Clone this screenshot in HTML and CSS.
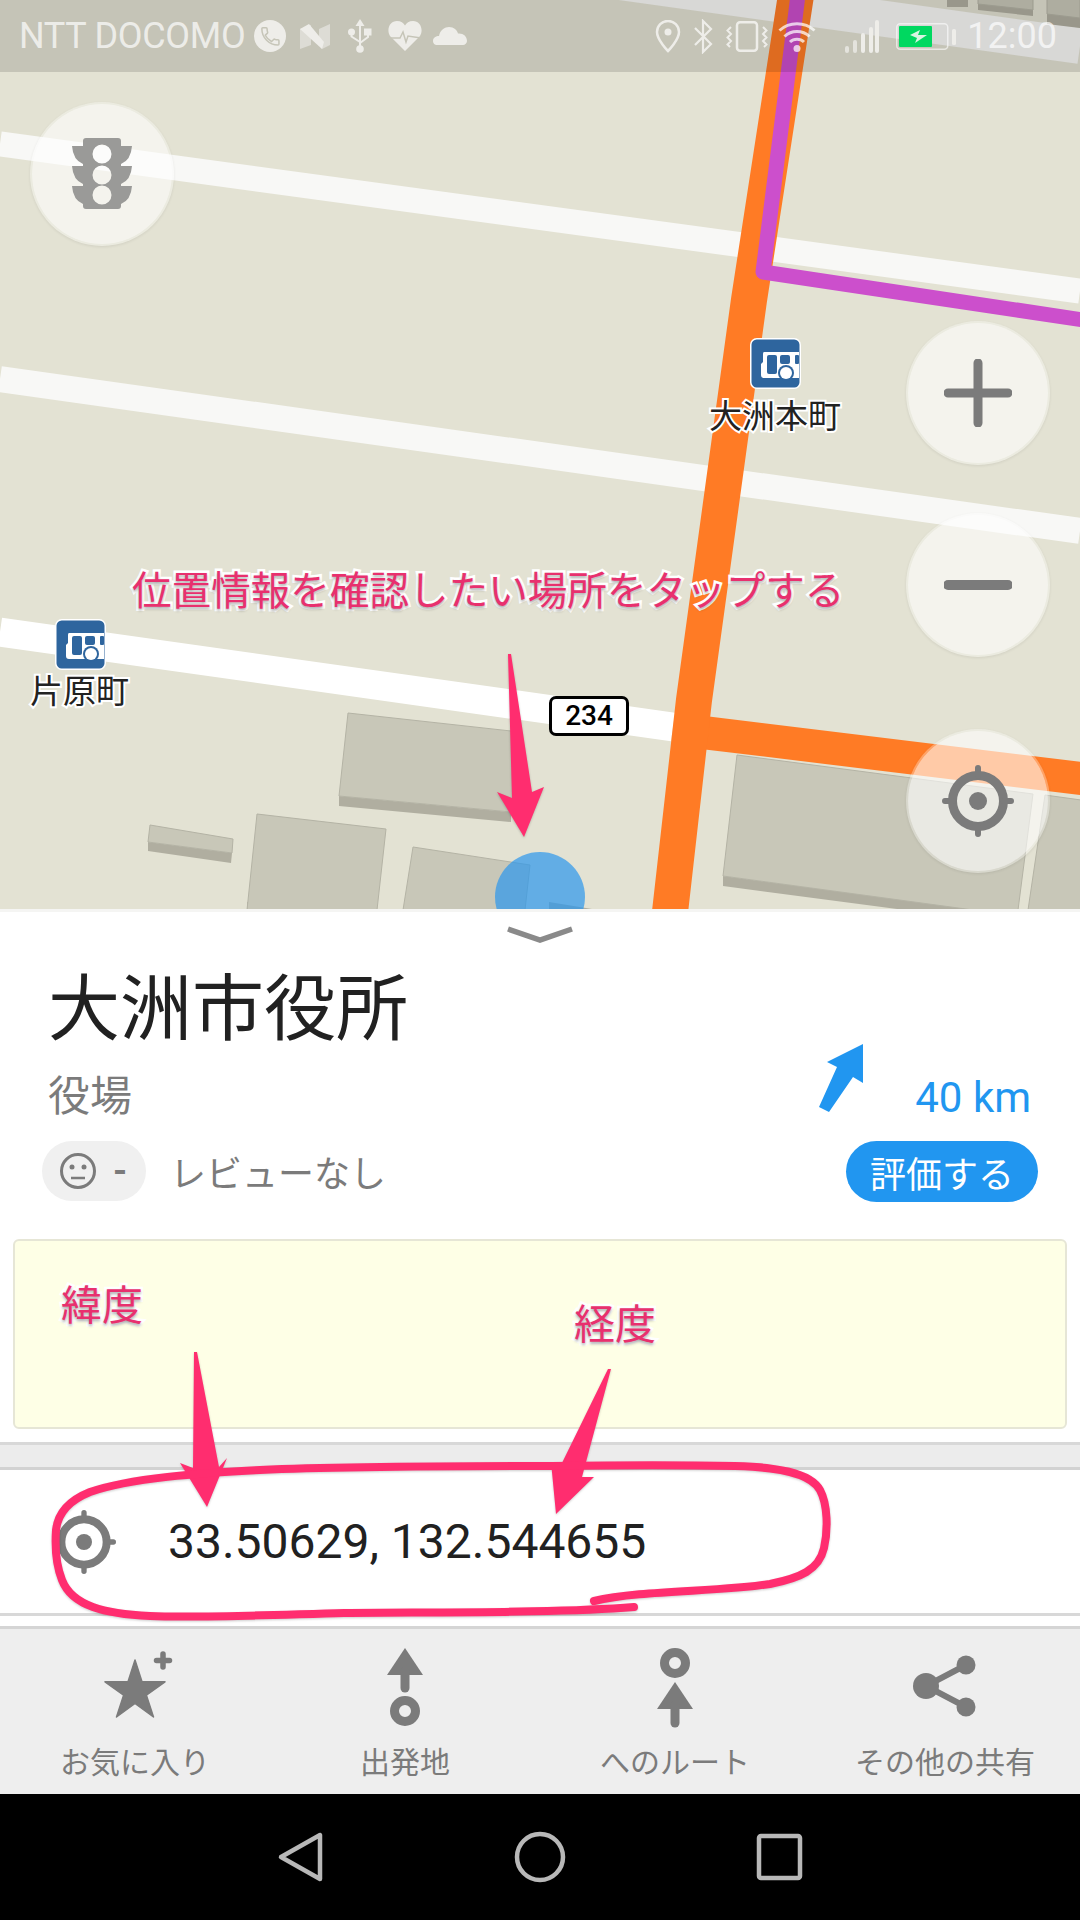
FILE: index.html
```html
<!DOCTYPE html>
<html lang="ja">
<head>
<meta charset="utf-8">
<title>大洲市役所</title>
<link rel="stylesheet" href="styles.css">
</head>
<body>
<svg class="defs" width="0" height="0">
  <symbol id="bus" viewBox="0 0 51 51">
    <rect x="0.75" y="0.75" width="49.5" height="49.5" rx="6" fill="#2e659e" stroke="#fff" stroke-width="1.5"/>
    <path d="M14 14H49V40H14Q11 40 11 37V26L13 24V16Q13 14 14 14Z" fill="#fff"/>
    <rect x="17" y="17" width="10" height="19" rx="2" fill="#2e659e"/>
    <rect x="30" y="17" width="10" height="9" rx="2" fill="#2e659e"/>
    <rect x="45" y="17" width="4" height="9" rx="1" fill="#2e659e"/>
    <circle cx="36" cy="35" r="8" fill="#2e659e"/>
    <circle cx="36" cy="35" r="6" fill="#fff"/>
  </symbol>
  <symbol id="target" viewBox="0 0 72 72">
    <circle cx="36" cy="36" r="25.5" fill="none" stroke="#7b7b7b" stroke-width="9"/>
    <circle cx="36" cy="36" r="9" fill="#7b7b7b"/>
    <path d="M36 3V11M36 61V69M3 36H11M61 36H69" stroke="#7b7b7b" stroke-width="6" stroke-linecap="round"/>
  </symbol>
</svg>

<div class="app">
  <section class="map">
    <svg class="map-canvas" width="1080" height="909" viewBox="0 0 1080 909">
      <rect width="1080" height="909" fill="#e3e2d3"/>
      <g stroke="#f8f8f6" fill="none">
        <path d="M0 144L1080 291" stroke-width="25"/>
        <path d="M0 379L1080 531" stroke-width="26"/>
        <path d="M620 -18L1080 46" stroke-width="36"/>
      </g>
      <path d="M0 632L673 727" stroke="#fff" stroke-width="29" fill="none"/>
      <g fill="#b0aea0">
        <polygon points="947,0 968,0 968,7 947,7"/>
        <polygon points="978,0 1033,0 1033,16 978,10"/>
        <polygon points="1047,0 1080,0 1080,28 1047,24"/>
        <polygon points="339,796 511,812 511,822 339,806"/>
        <polygon points="148,842 232,853 231,863 148,851"/>
        <polygon points="247,902 290,909 247,909"/>
        <polygon points="723,876 973,909 897,909 723,886"/>
      </g>
      <g fill="#c8c7b8" stroke="#b4b3a5" stroke-width="1">
        <polygon points="978,-20 1033,-20 1033,10 978,4"/>
        <polygon points="1047,-20 1080,-20 1080,18 1047,14"/>
        <polygon points="348,713 520,732 511,812 339,796"/>
        <polygon points="150,825 233,839 232,853 148,842"/>
        <polygon points="257,814 386,829 377,910 247,910"/>
        <polygon points="413,847 530,865 525,910 403,910"/>
        <polygon points="737,755 1033,794 1018,910 973,910 723,876"/>
        <polygon points="1045,795 1081,800 1081,910 1028,910"/>
      </g>
      <path d="M549 902L592 909H549Z" fill="#b0aea0"/>
      <g fill="none" stroke="#ff7b25">
        <path d="M707 733L1085 779" stroke-width="33"/>
        <path d="M796 -5L749 300L694 700L670 912" stroke-width="36"/>
      </g>
      <path d="M798 -5L763 272L1090 321" fill="none" stroke="#cc4fcc" stroke-width="15" stroke-linejoin="round"/>
      <circle cx="540" cy="897" r="45" fill="#2b97ed" fill-opacity="0.7"/>
    </svg>

    <span class="shield">234</span>

    <svg class="poi poi-honmachi" width="51" height="51"><use href="#bus"/></svg>
    <span class="poi-label label-honmachi">大洲本町</span>
    <svg class="poi poi-katahara" width="51" height="51"><use href="#bus"/></svg>
    <span class="poi-label label-katahara">片原町</span>

    <button class="fab fab-traffic" type="button" aria-label="交通情報">
      <svg width="60" height="72" viewBox="0 0 60 72">
        <path fill="#9a9a98" fill-rule="evenodd" d="M14 0H46Q49 0 49 3V68Q49 71 46 71H14Q11 71 11 68V3Q11 0 14 0ZM30 6.500A9.500 9.500 0 1 0 30 25.500A9.500 9.500 0 1 0 30 6.500ZM30 27.500A9.500 9.500 0 1 0 30 46.500A9.500 9.500 0 1 0 30 27.500ZM30 47.500A9.500 9.500 0 1 0 30 66.500A9.500 9.500 0 1 0 30 47.500Z"/>
        <path fill="#9a9a98" d="M11 8H0Q1 22 11 26ZM49 8H60Q59 22 49 26ZM11 28H0Q1 42 11 46ZM49 28H60Q59 42 49 46ZM11 48H0Q1 62 11 66ZM49 48H60Q59 62 49 66Z"/>
      </svg>
    </button>
    <button class="fab fab-plus" type="button" aria-label="拡大">
      <svg width="68" height="68" viewBox="0 0 68 68"><path d="M34 4V64M4 34H64" stroke="#7b7b7b" stroke-width="9" stroke-linecap="round"/></svg>
    </button>
    <button class="fab fab-minus" type="button" aria-label="縮小">
      <svg width="68" height="12" viewBox="0 0 68 12"><path d="M4 6H64" stroke="#7b7b7b" stroke-width="10" stroke-linecap="round"/></svg>
    </button>
    <button class="fab fab-locate" type="button" aria-label="現在地">
      <svg width="72" height="72"><use href="#target"/></svg>
    </button>

    <header class="status">
      <div class="status-group">
        <span class="carrier">NTT DOCOMO</span>
        <svg class="ic-phone" width="32" height="32" viewBox="0 0 32 32"><circle cx="16" cy="16" r="16" fill="#eeede9"/><path transform="translate(5 5) scale(.95)" fill="none" stroke="#c6c5b8" stroke-width="1.600" d="M6.600 10.800c1.400 2.800 3.800 5.100 6.600 6.600l2.200-2.200c.3-.3.700-.4 1-.2 1.100.4 2.300.6 3.600.6.600 0 1 .4 1 1V20c0 .6-.4 1-1 1C10.600 21 3 13.400 3 4c0-.6.400-1 1-1h3.500c.6 0 1 .4 1 1 0 1.300.2 2.500.6 3.600.1.300 0 .7-.2 1l-2.300 2.200z"/></svg>
        <svg class="ic-n" width="30" height="25" viewBox="0 0 30 25"><polygon points="0,5 0,25 11,21 11,1" fill="#dddcd5"/><polygon points="19,5 30,0 30,21 22,25 19,19" fill="#dddcd5"/><polygon points="0,5 9,0 24,18 22,25" fill="#eeede9"/></svg>
        <svg class="ic-usb" width="24" height="34" viewBox="0 0 24 34"><g fill="#eeede9"><path d="M12 0L7.500 7H16.500Z"/><circle cx="12" cy="30" r="3.800"/><circle cx="3.500" cy="13" r="3.500"/><rect x="16" y="9.500" width="7.500" height="7"/></g><path d="M12 5V29M3.500 14V17.500L12 23M20 15V18L12 24" fill="none" stroke="#eeede9" stroke-width="2"/></svg>
        <svg class="ic-heart" width="34" height="30" viewBox="0 0 34 30"><path fill="#eeede9" d="M17 30L2 15C-2 8 2 0 9 0C13 0 15.500 2 17 4.500C18.500 2 21 0 25 0C32 0 36 8 32 15Z"/><polyline points="1,17 12,17 15,11 18,21 20,15 33,17" fill="none" stroke="#c6c5b8" stroke-width="1.500"/></svg>
        <svg class="ic-cloud" width="34" height="18" viewBox="0 0 34 18"><path fill="#eeede9" d="M4 18C1 18 0 15.500 0 14C0 10.500 3 9 6 9C7 3 12 0 16 0C21 0 24 3 25 6.500C30 6 34 9 34 14C34 16 32 18 30 18Z"/></svg>
      </div>
      <div class="status-group">
        <svg class="ic-pin" width="26" height="33" viewBox="0 0 26 33"><path d="M13 31C13 31 2 20 2 12A11 11 0 0 1 24 12C24 20 13 31 13 31Z" fill="none" stroke="#eeede9" stroke-width="2.500"/><circle cx="13" cy="12" r="3.500" fill="#eeede9"/></svg>
        <svg class="ic-bt" width="21" height="35" viewBox="0 0 21 35"><polyline points="2,9 18,25 10,33 10,2 18,10 2,26" fill="none" stroke="#eeede9" stroke-width="2.200"/></svg>
        <svg class="ic-vib" width="42" height="31" viewBox="0 0 42 31"><rect x="11" y="1.250" width="20" height="28.500" rx="3" fill="none" stroke="#eeede9" stroke-width="2.500"/><path d="M5 6L1.500 9.500L5 13L1.500 16.500L5 20L1.500 23.500L4 26M37 6L40.500 9.500L37 13L40.500 16.500L37 20L40.500 23.500L38 26" fill="none" stroke="#eeede9" stroke-width="2"/></svg>
        <svg class="ic-wifi" width="38" height="33" viewBox="0 0 38 33"><circle cx="19" cy="28.500" r="3.500" fill="#fff" fill-opacity=".72"/><path d="M12 22A10 10 0 0 1 26 22M6.500 16.500A18 18 0 0 1 31.500 16.500M1.500 10.500A26 26 0 0 1 36.500 10.500" fill="none" stroke="#fff" stroke-opacity=".72" stroke-width="3"/></svg>
        <svg class="ic-signal" width="34" height="33" viewBox="0 0 34 33"><g fill="#eeede9"><rect x="0" y="26" width="4" height="7" rx="2" opacity=".75"/><rect x="8" y="20" width="4" height="13" rx="2" opacity=".75"/><rect x="16" y="13" width="4" height="20" rx="2"/><rect x="24" y="7" width="4" height="26" rx="2"/><rect x="30" y="0" width="4" height="33" rx="2"/></g></svg>
        <svg class="ic-batt" width="60" height="27" viewBox="0 0 60 27"><rect x=".75" y=".75" width="51" height="25.500" rx="3.500" fill="none" stroke="#fff" stroke-opacity=".6" stroke-width="1.500"/><rect x="3" y="3" width="33" height="21" rx="1" fill="#00d860"/><path d="M14 12L24 7L22 12H31L19 20L21 15Z" fill="#d8f5e2"/><rect x="56" y="6" width="4" height="16" rx="1.500" fill="#eeede9"/></svg>
        <time class="clock">12:00</time>
      </div>
    </header>
  </section>

  <section class="sheet">
    <div class="handle">
      <svg width="68" height="18" viewBox="0 0 68 18"><path d="M2 3L34 14L66 3" fill="none" stroke="#8a8a8a" stroke-width="5.500"/></svg>
    </div>
    <div class="place">
      <div class="place-info">
        <h1 class="place-name">大洲市役所</h1>
        <p class="place-type">役場</p>
        <div class="review">
          <span class="review-chip">
            <svg width="38" height="38" viewBox="0 0 38 38"><circle cx="19" cy="19" r="16.500" fill="none" stroke="#7b7b7b" stroke-width="3"/><circle cx="13" cy="15" r="2.500" fill="#7b7b7b"/><circle cx="25" cy="15" r="2.500" fill="#7b7b7b"/><path d="M12 26H26" stroke="#7b7b7b" stroke-width="2.500"/></svg>
            <span class="review-score">-</span>
          </span>
          <span class="review-text">レビューなし</span>
        </div>
      </div>
      <div class="place-side">
        <div class="distance">
          <svg width="44" height="68" viewBox="0 0 44 68"><polygon points="44,0 8,18 18,23 0,63 10,68 34,33 44,39" fill="#2196f0"/></svg>
          <span class="distance-text">40 km</span>
        </div>
        <button class="rate" type="button">評価する</button>
      </div>
    </div>
    <div class="note"></div>
    <div class="band"></div>
    <div class="coords">
      <svg width="64" height="64"><use href="#target"/></svg>
      <span class="coords-text">33.50629, 132.544655</span>
    </div>
    <div class="spacer"></div>
    <nav class="actions">
      <div class="action">
        <svg width="80" height="80" viewBox="94 1648 80 80"><polygon points="134,1660 141,1681.800 164,1681.800 145.400,1695.200 152.500,1717 134,1703.500 115.500,1717 122.600,1695.200 104,1681.800 127,1681.800" fill="#7b7b7b" stroke="#7b7b7b" stroke-width="1.500" stroke-linejoin="round"/><path d="M162 1654V1667M155.500 1660.500H168.500" stroke="#7b7b7b" stroke-width="5.500" stroke-linecap="round"/></svg>
        <span class="action-label">お気に入り</span>
      </div>
      <div class="action">
        <svg width="80" height="80" viewBox="365 1648 80 80"><polygon points="405,1648 423,1675 387,1675" fill="#7b7b7b"/><path d="M405 1672V1688" stroke="#7b7b7b" stroke-width="9" stroke-linecap="round"/><circle cx="405" cy="1711" r="10.500" fill="none" stroke="#7b7b7b" stroke-width="9"/></svg>
        <span class="action-label">出発地</span>
      </div>
      <div class="action">
        <svg width="80" height="80" viewBox="635 1648 80 80"><circle cx="675" cy="1663" r="10.500" fill="none" stroke="#7b7b7b" stroke-width="9"/><polygon points="675,1682 693,1709 657,1709" fill="#7b7b7b"/><path d="M675 1706V1723" stroke="#7b7b7b" stroke-width="9" stroke-linecap="round"/></svg>
        <span class="action-label">へのルート</span>
      </div>
      <div class="action">
        <svg width="80" height="80" viewBox="905 1648 80 80"><path d="M966 1665L926 1686L966 1707" fill="none" stroke="#7b7b7b" stroke-width="6"/><circle cx="966" cy="1665" r="9.500" fill="#7b7b7b"/><circle cx="926" cy="1686" r="13" fill="#7b7b7b"/><circle cx="966" cy="1707" r="9.500" fill="#7b7b7b"/></svg>
        <span class="action-label">その他の共有</span>
      </div>
    </nav>
  </section>

  <footer class="navbar">
    <svg width="1080" height="126" viewBox="0 1794 1080 126">
      <g fill="none" stroke="#b8b8b8" stroke-width="4.500" stroke-linejoin="round">
        <polygon points="320,1835 320,1879 281,1857"/>
        <circle cx="540" cy="1857" r="23"/>
        <rect x="759" y="1836" width="41" height="42" rx="2"/>
      </g>
    </svg>
  </footer>
</div>

<div class="markup">
  <svg class="markup-canvas" width="1080" height="1920" viewBox="0 0 1080 1920">
    <g class="markup-shapes" fill="#ff2d6f">
      <polygon points="508,654 511,654 532,792 544,787 524,837 497,792 512,798"/>
      <polygon points="194,1352 197,1352 219,1467 227,1458 207,1507 180,1463 193,1468"/>
      <polygon points="608,1369 611,1369 582,1477 594,1477 556,1514 551,1462 561,1465"/>
      <path d="M634 1607C560 1613 440 1612 344 1613C270 1615 200 1618 150 1616C105 1614 72 1606 62 1580C56 1565 55 1545 56 1530C58 1512 70 1500 90 1492C130 1478 200 1473 260 1470C350 1466 470 1466 551 1466C620 1465 690 1465 735 1466C775 1467 810 1472 820 1490C828 1505 828 1530 824 1548C819 1570 800 1578 770 1584C720 1592 640 1590 594 1601" fill="none" stroke="#ff2d6f" stroke-width="8" stroke-linecap="round"/>
    </g>
  </svg>
  <span class="callout callout-tap">位置情報を確認したい場所をタップする</span>
  <span class="callout callout-lat">緯度</span>
  <span class="callout callout-lng">経度</span>
</div>
</body>
</html>
```

FILE: styles.css
```css
* { box-sizing: border-box; }
html, body { margin: 0; padding: 0; }
body {
  position: relative;
  width: 1080px;
  height: 1920px;
  overflow: hidden;
  background: #fff;
  font-family: Roboto, "Noto Sans CJK JP", sans-serif;
}
svg { display: block; }
.defs { position: absolute; }
.app { display: flex; flex-direction: column; height: 1920px; }

/* Map */
.map { position: relative; height: 909px; flex: none; overflow: hidden; }
.map-canvas { position: absolute; left: 0; top: 0; }
.status {
  position: absolute;
  left: 0; top: 0; right: 0;
  height: 72px;
  display: flex;
  justify-content: space-between;
  align-items: center;
  padding: 0 23px 0 19px;
  background: rgba(0, 0, 0, .13);
  color: rgba(255, 255, 255, .7);
  font-size: 36px;
}
.status-group { display: flex; align-items: center; }
.status-group:first-child { margin-right: auto; }
.carrier { letter-spacing: -.3px; white-space: nowrap; }
.clock { margin-left: 11px; }
.ic-phone { margin-left: 9px; }
.ic-n { margin-left: 14px; }
.ic-usb { margin-left: 18px; }
.ic-heart { margin-left: 16px; }
.ic-cloud { margin-left: 11px; }
.ic-bt { margin-left: 12px; }
.ic-vib { margin-left: 12px; }
.ic-wifi { margin-left: 10px; }
.ic-signal { margin-left: 29px; }
.ic-batt { margin-left: 17px; }

.fab {
  position: absolute;
  width: 144px;
  height: 144px;
  padding: 0;
  border: 2px solid rgba(255, 255, 255, .3);
  border-radius: 50%;
  background: rgba(255, 255, 255, .6);
  background-clip: padding-box;
  box-shadow: 0 1px 3px rgba(0, 0, 0, .08);
  display: flex;
  align-items: center;
  justify-content: center;
}
.fab-traffic { left: 30px; top: 102px; }
.fab-plus { left: 906px; top: 321px; }
.fab-minus { left: 906px; top: 513px; }
.fab-locate { left: 906px; top: 729px; }

.shield {
  position: absolute;
  left: 549px; top: 696px;
  width: 80px; height: 40px;
  border: 3px solid #000;
  border-radius: 7px;
  background: #fff;
  color: #000;
  font-size: 28px;
  font-weight: 500;
  line-height: 34px;
  text-align: center;
}
.poi { position: absolute; }
.poi-honmachi { left: 750px; top: 338px; }
.poi-katahara { left: 55px; top: 619px; }
.poi-label {
  position: absolute;
  font-size: 33px;
  line-height: 40px;
  color: #222;
  white-space: nowrap;
  -webkit-text-stroke: 4px #fff;
  paint-order: stroke fill;
}
.label-honmachi { left: 709px; top: 397px; }
.label-katahara { left: 30px; top: 672px; }

/* Sheet */
.sheet { display: flex; flex-direction: column; height: 885px; flex: none; border-top: 3px solid #f5f5f3; }
.handle { height: 48px; display: flex; justify-content: center; padding-top: 14px; flex: none; }
.place { height: 279px; flex: none; display: flex; justify-content: space-between; padding: 10px 42px 0 42px; }
.place-name { margin: 0 0 0 6px; font-size: 72px; font-weight: 400; line-height: 80px; color: #212121; }
.place-type { margin: 22px 0 0 6px; font-size: 42px; line-height: 50px; color: #7b7b7b; }
.review { display: flex; align-items: center; margin-top: 19px; }
.review-chip {
  width: 104px; height: 60px;
  border-radius: 30px;
  background: #f0f0f0;
  display: flex;
  align-items: center;
  padding-left: 17px;
}
.review-score { margin-left: 16px; font-size: 36px; font-weight: 700; line-height: 1; color: #7b7b7b; }
.review-text { margin-left: 24px; font-size: 36px; color: #7b7b7b; }
.place-side { display: flex; flex-direction: column; align-items: flex-end; padding-top: 74px; }
.distance { display: flex; align-items: flex-end; gap: 52px; height: 68px; margin-right: 7px; }
.distance-text { font-size: 42px; line-height: 42px; color: #2196f0; margin-bottom: -7px; }
.rate {
  margin-top: 29px;
  width: 192px; height: 61px;
  padding: 0;
  border: 0;
  border-radius: 31px;
  background: #2196f0;
  color: #fff;
  font: 400 36px Roboto, "Noto Sans CJK JP", sans-serif;
}
.note { height: 190px; flex: none; margin: 0 13px; background: #feffe6; border: 2px solid #e6e6d6; border-radius: 6px; }
.band { height: 38px; flex: none; margin-top: 13px; background: #ececec; border-top: 3px solid #d8d8d8; }
.coords {
  height: 149px;
  flex: none;
  margin-top: -13px;
  display: flex;
  align-items: center;
  padding-left: 52px;
  background: #fff;
  border-top: 3px solid #d2d2d2;
  border-bottom: 3px solid #d8d8d8;
}
.coords-text { margin-left: 52px; font-size: 48px; color: #212121; white-space: nowrap; }
.spacer { height: 10px; flex: none; }
.actions {
  height: 168px;
  flex: none;
  display: grid;
  grid-template-columns: repeat(4, 270px);
  border-top: 3px solid #d5d5d5;
  background: #eee;
}
.action { display: flex; flex-direction: column; align-items: center; padding-top: 19px; }
.action-label { margin-top: 13px; font-size: 30px; line-height: 44px; color: #7b7b7b; white-space: nowrap; }
.navbar { height: 126px; flex: none; background: #000; }

/* Hand-drawn annotations on top of the screenshot */
.markup { position: absolute; left: 0; top: 0; width: 1080px; height: 1920px; pointer-events: none; }
.markup-canvas { position: absolute; left: 0; top: 0; }
.markup-shapes { filter: drop-shadow(0 1px 1px rgba(0, 0, 0, .2)); }
.callout {
  position: absolute;
  color: #e8306e;
  line-height: 50px;
  white-space: nowrap;
  -webkit-text-stroke: 5px #fff;
  paint-order: stroke fill;
  text-shadow: 0 2px 3px rgba(0, 0, 0, .35);
}
.callout-tap { left: 132px; top: 567px; font-size: 39.600px; }
.callout-lat { left: 61px; top: 1281px; font-size: 41px; }
.callout-lng { left: 574px; top: 1300px; font-size: 41px; }
```
